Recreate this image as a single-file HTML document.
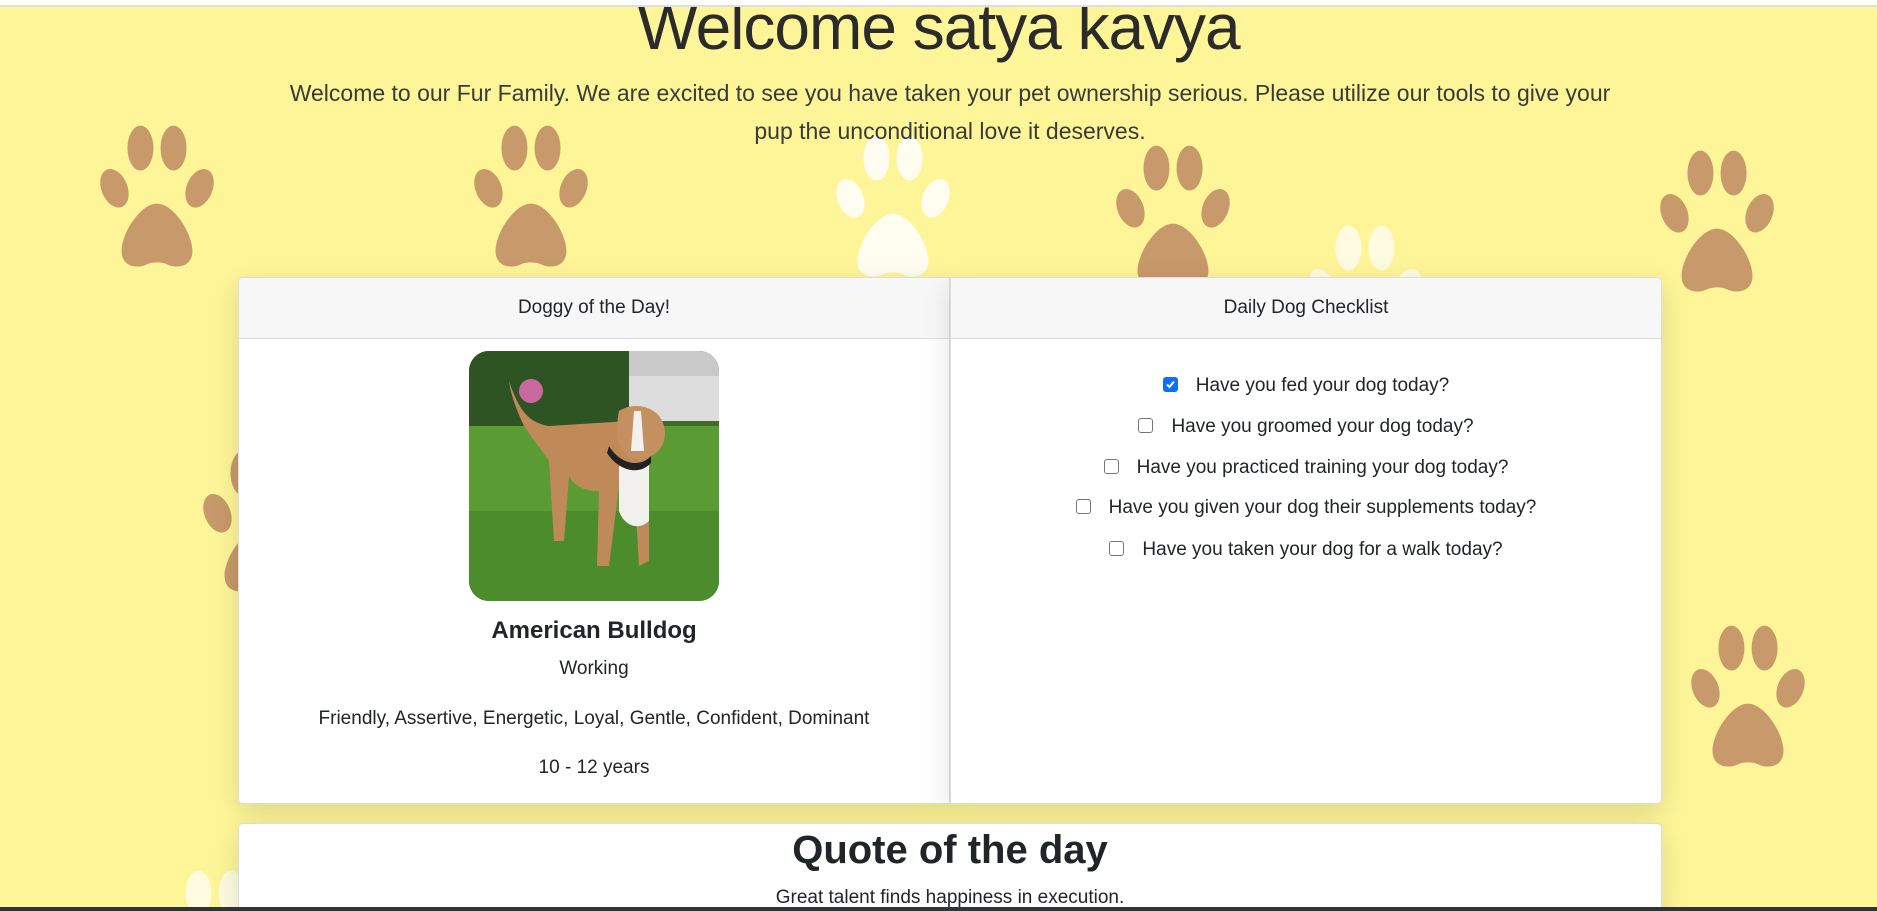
<!DOCTYPE html>
<html><head><meta charset="utf-8">
<style>
*{box-sizing:border-box;margin:0;padding:0}
html,body{width:1877px;height:911px;overflow:hidden}
body{background:#fdf597;font-family:"Liberation Sans",sans-serif;color:#212529;position:relative}
.topline{position:absolute;left:0;top:0;width:1877px;height:7px;background:#fff;border-bottom:2px solid #ddd;z-index:5}
.paw{position:absolute;width:130px;height:156px}
h1{position:absolute;left:0;width:1877px;top:-10px;text-align:center;font-size:64px;font-weight:300;color:#2b2b2b;letter-spacing:-1px}
.lead{position:absolute;left:270px;width:1360px;top:74px;text-align:center;font-size:23px;line-height:38px;color:#3a3a3a}
.card{position:absolute;background:#fff;border:1px solid #ddd;border-radius:5px;box-shadow:0 8px 28px rgba(0,0,0,.12);overflow:hidden}
.hdr{height:61px;background:#f7f7f7;border-bottom:1px solid #ddd;text-align:center;line-height:60px;font-size:19px}
.c{position:absolute;left:0;right:0;text-align:center;font-size:19px}
.item{position:absolute;left:0;right:0;text-align:center;font-size:19px}
.cb{display:inline-block;width:15px;height:15px;border:1px solid #777;border-radius:3px;vertical-align:-1px;margin-right:18px;background:#fff}
.cb.on{background:#0d6efd;border-color:#0d6efd;position:relative}
.bottombar{position:absolute;left:0;top:907px;width:1877px;height:4px;background:#333}
</style></head><body>
<svg width="0" height="0" style="position:absolute"><defs>
<g id="p">
<ellipse cx="16" cy="62" rx="11" ry="17" transform="rotate(-22 16 62)"/>
<ellipse cx="38" cy="28" rx="11" ry="19"/>
<ellipse cx="66" cy="28" rx="11" ry="19"/>
<ellipse cx="88" cy="62" rx="11" ry="17" transform="rotate(22 88 62)"/>
<path d="M52 75 C38 75 22 100 22 115 C22 128 34 130 42 127 C48 124 56 124 62 127 C70 130 82 128 82 115 C82 100 66 75 52 75Z"/>
</g></defs></svg>
<div class="topline"></div>
<svg class="paw" style="left:92px;top:115px" viewBox="0 0 104 132" fill="#c8996a"><use href="#p"/></svg>
<svg class="paw" style="left:466px;top:115px" viewBox="0 0 104 132" fill="#c8996a"><use href="#p"/></svg>
<svg class="paw" style="left:828px;top:125px" viewBox="0 0 104 132" fill="#fffdf0"><use href="#p"/></svg>
<svg class="paw" style="left:1108px;top:135px" viewBox="0 0 104 132" fill="#c8996a"><use href="#p"/></svg>
<svg class="paw" style="left:1652px;top:140px" viewBox="0 0 104 132" fill="#c8996a"><use href="#p"/></svg>
<svg class="paw" style="left:1683px;top:615px" viewBox="0 0 104 132" fill="#c8996a"><use href="#p"/></svg>
<svg class="paw" style="left:1300px;top:215px" viewBox="0 0 104 132" fill="#fffbe0"><use href="#p"/></svg>
<svg class="paw" style="left:195px;top:440px" viewBox="0 0 104 132" fill="#c8996a"><use href="#p"/></svg>
<svg class="paw" style="left:150px;top:860px" viewBox="0 0 104 132" fill="#fffbe0"><use href="#p"/></svg>

<h1>Welcome satya kavya</h1>
<div class="lead">Welcome to our Fur Family. We are excited to see you have taken your pet ownership serious. Please utilize our tools to give your pup the unconditional love it deserves.</div>

<div class="card" style="left:238px;top:277px;width:712px;height:527px;border-radius:5px 0 0 5px">
<div class="hdr">Doggy of the Day!</div>
<svg style="position:absolute;left:230px;top:73px" width="250" height="250" viewBox="0 0 250 250">
<defs><clipPath id="r"><rect width="250" height="250" rx="20"/></clipPath></defs>
<g clip-path="url(#r)">
<rect width="250" height="250" fill="#4c8a2c"/>
<rect width="250" height="80" fill="#3f6b2a"/>
<rect x="150" y="0" width="100" height="70" fill="#c9c9c9"/>
<rect x="160" y="25" width="90" height="45" fill="#ddd"/>
<rect x="0" y="0" width="160" height="85" fill="#2f5424"/>
<rect x="0" y="75" width="250" height="175" fill="#5a9b34"/>
<rect x="0" y="160" width="250" height="90" fill="#4d8c2c"/>
<circle cx="62" cy="40" r="12" fill="#c86aa0"/>
<path d="M40 30 C50 60 60 72 80 75 L160 70 C175 72 185 90 180 120 L180 210 L170 215 L165 130 L150 135 L140 215 L128 215 L130 140 C115 140 105 135 100 125 L95 190 L85 190 L80 110 C70 95 65 90 55 75 C48 60 42 45 40 30Z" fill="#c08a58"/>
<path d="M150 60 C165 50 190 55 195 75 C200 95 185 110 165 108 C150 105 145 85 150 60Z" fill="#c59060"/>
<path d="M165 60 L172 60 L175 100 L162 100Z" fill="#f3f1ee"/>
<path d="M150 110 C160 120 175 120 180 110 L180 170 C170 180 155 175 150 160Z" fill="#f2f0ec"/>
<path d="M140 95 C150 112 170 118 182 105 L182 112 C170 125 150 120 138 102Z" fill="#222"/>
</g></svg>
<div class="c" style="top:339px;font-size:24px;font-weight:bold">American Bulldog</div>
<div class="c" style="top:380px">Working</div>
<div class="c" style="top:430px">Friendly, Assertive, Energetic, Loyal, Gentle, Confident, Dominant</div>
<div class="c" style="top:479px">10 - 12 years</div>
</div>

<div class="card" style="left:950px;top:277px;width:712px;height:527px;border-radius:0 5px 5px 0">
<div class="hdr">Daily Dog Checklist</div>
<div class="item" style="top:97px"><span class="cb on"><svg width="13" height="13" viewBox="0 0 13 13" style="position:absolute;left:0;top:0"><path d="M3 6.5 L5.5 9 L10 3.5" stroke="#fff" stroke-width="2" fill="none"/></svg></span>Have you fed your dog today?</div>
<div class="item" style="top:138px"><span class="cb"></span>Have you groomed your dog today?</div>
<div class="item" style="top:179px"><span class="cb"></span>Have you practiced training your dog today?</div>
<div class="item" style="top:219px"><span class="cb"></span>Have you given your dog their supplements today?</div>
<div class="item" style="top:261px"><span class="cb"></span>Have you taken your dog for a walk today?</div>
</div>

<div class="card" style="left:238px;top:823px;width:1424px;height:88px;border-radius:5px 5px 0 0">
<div class="c" style="top:4px;font-size:40px;font-weight:bold">Quote of the day</div>
<div class="c" style="top:63px;font-size:19px">Great talent finds happiness in execution.</div>
</div>
<div class="bottombar"></div>
</body></html>
